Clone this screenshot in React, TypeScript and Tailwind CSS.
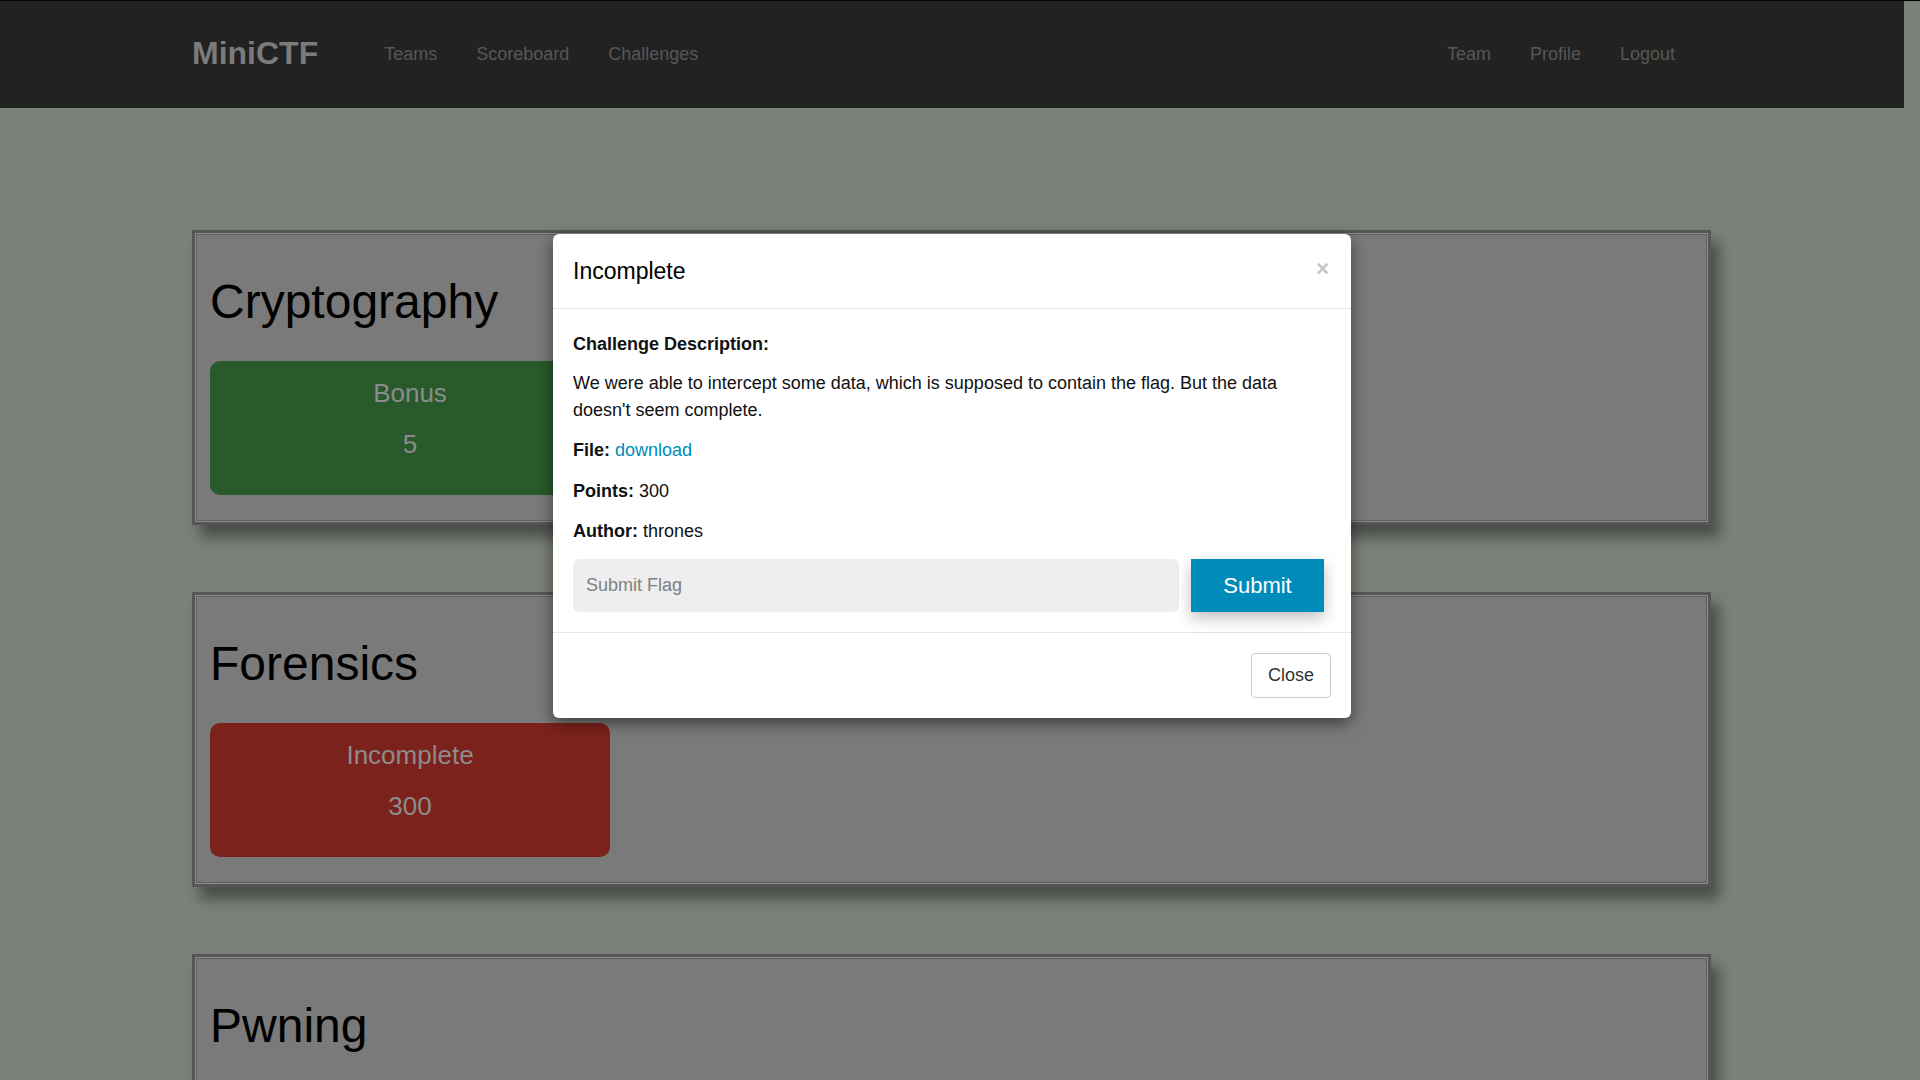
import React from "react";

const font = { fontFamily: '"Liberation Sans", Arial, Helvetica, sans-serif' };

function Card({ title, tiles }: { title: string; tiles: { label: string; pts: string; color: string }[] }) {
  return (
    <div className="w-[1519px] h-[295px] border-[3px] border-[#565656] bg-[#7a7a7a] shadow-[inset_0_0_0_1px_#8c8c8c,inset_0_0_0_2px_#5f5f5f,8px_12px_12px_rgba(0,0,0,0.4)] px-[15px] pt-[42px] shrink-0">
      <h2 className="text-[48px] leading-[53px] text-black">{title}</h2>
      <div className="mt-[33px] flex gap-[20px]">
        {tiles.map((t) => (
          <div
            key={t.label}
            className={`w-[400px] h-[134px] rounded-[10px] flex flex-col items-center pt-[17px] gap-[21px] text-[26px] leading-[30px] text-[#8c8c8c] ${t.color}`}
          >
            <div>{t.label}</div>
            <div>{t.pts}</div>
          </div>
        ))}
      </div>
    </div>
  );
}

export default function App() {
  return (
    <div className="relative w-[1920px] h-[1080px] overflow-hidden bg-[#7a8178]" style={font}>
      <div className="h-px bg-black w-full" />
      <nav className="w-[1904px] h-[107px] bg-[#222222] flex items-center justify-between pl-[192px] pr-[229px]">
        <div className="flex items-center">
          <span className="text-[32px] font-bold text-[#7b7b7b] leading-none -mt-[3px]">MiniCTF</span>
          <div className="ml-[66px] flex gap-[39px] text-[18px] text-[#575757]">
            <span>Teams</span>
            <span>Scoreboard</span>
            <span>Challenges</span>
          </div>
        </div>
        <div className="flex gap-[39px] text-[18px] text-[#575757]">
          <span>Team</span>
          <span>Profile</span>
          <span>Logout</span>
        </div>
      </nav>

      <main className="pl-[192px] pt-[122px] flex flex-col gap-[67px]">
        <Card title="Cryptography" tiles={[{ label: "Bonus", pts: "5", color: "bg-[#285a2b]" }]} />
        <Card title="Forensics" tiles={[{ label: "Incomplete", pts: "300", color: "bg-[#7c221c]" }]} />
        <Card title="Pwning" tiles={[]} />
      </main>

      <div className="absolute left-[553px] top-[234px] w-[798px] bg-white rounded-[6px] shadow-[0_5px_15px_rgba(0,0,0,0.5)]">
        <div className="h-[75px] border-b border-[#e5e5e5] flex items-center justify-between px-[20px]">
          <h4 className="text-[23px] text-black">Incomplete</h4>
          <span className="text-[22px] font-bold text-[#c4c4c4] leading-none -mt-[4px] mr-[2px]">×</span>
        </div>
        <div className="px-[20px] pt-[22px] pb-[20px] text-[18px] leading-[27px] text-[#111]">
          <p className="mb-[12px] font-bold">Challenge Description:</p>
          <p className="mb-[13px]">
            We were able to intercept some data, which is supposed to contain the flag. But the data doesn't seem complete.
          </p>
          <p className="mb-[14px]">
            <b>File:</b> <a className="text-[#008cba]">download</a>
          </p>
          <p className="mb-[13px]">
            <b>Points:</b> 300
          </p>
          <p>
            <b>Author:</b> thrones
          </p>
          <div className="mt-[14px] flex items-center pr-[7px]">
            <input
              placeholder="Submit Flag"
              className="w-[606px] h-[53px] bg-[#eeeeee] rounded-[6px] pl-[13px] text-[18px] placeholder:text-[#808080] outline-none"
              style={font}
            />
            <button className="ml-[12px] w-[133px] h-[53px] bg-[#008cba] text-white text-[22px] shadow-[0_6px_14px_rgba(0,0,0,0.25)]" style={font}>
              Submit
            </button>
          </div>
        </div>
        <div className="border-t border-[#e5e5e5] pt-[20px] pb-[20px] px-[20px] flex justify-end">
          <button className="w-[80px] h-[45px] border border-[#cccccc] rounded-[4px] text-[18px] text-[#333]" style={font}>
            Close
          </button>
        </div>
      </div>
    </div>
  );
}
